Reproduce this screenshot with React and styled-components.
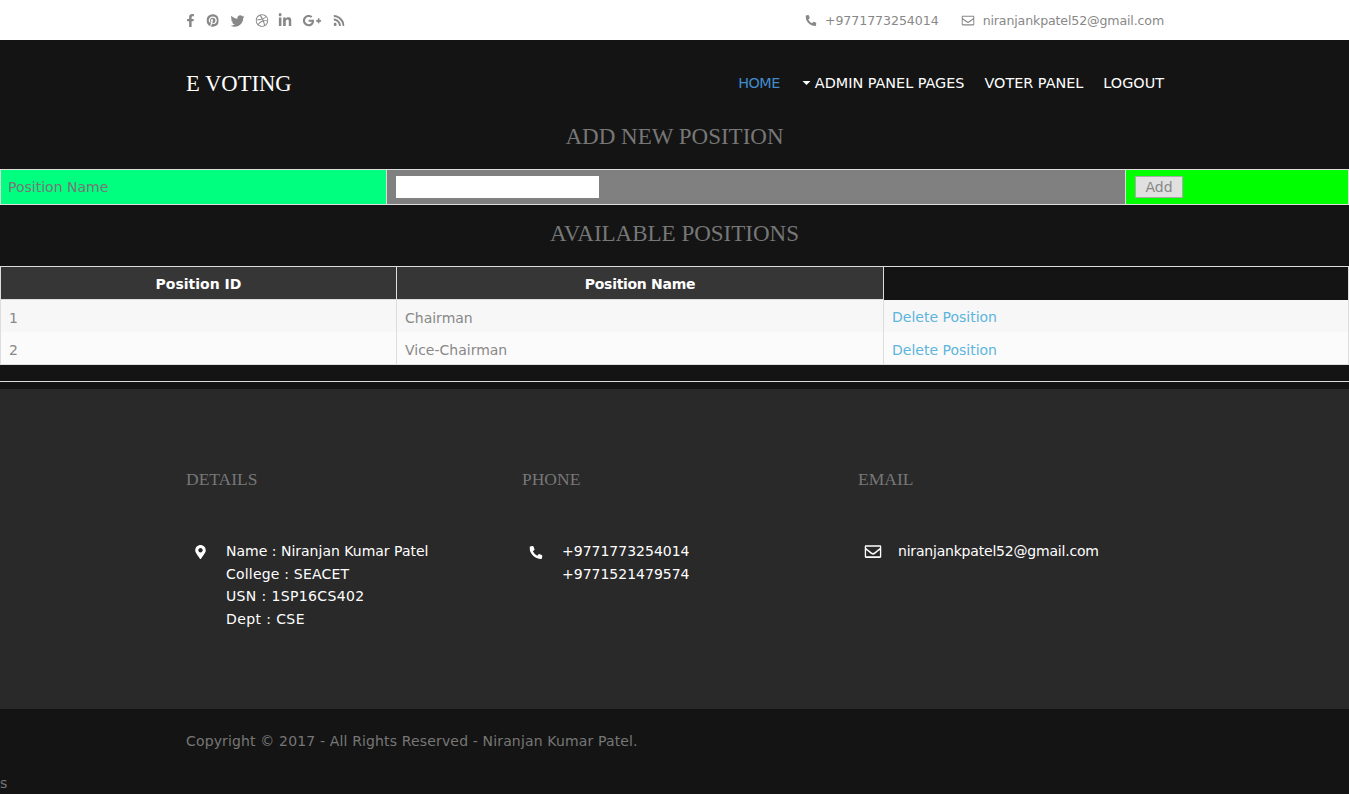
import styled, { createGlobalStyle } from "styled-components";
import {
  FaFacebookF,
  FaPinterest,
  FaTwitter,
  FaDribbble,
  FaLinkedinIn,
  FaGooglePlusG,
  FaRss,
  FaPhoneAlt,
  FaRegEnvelope,
  FaMapMarkerAlt,
} from "react-icons/fa";

const SOCIAL = [
  { Icon: FaFacebookF, w: 8, h: 13, slot: 20 },
  { Icon: FaPinterest, w: 12.6, h: 13, slot: 24 },
  { Icon: FaTwitter, w: 14, h: 14, slot: 25 },
  { Icon: FaDribbble, w: 13, h: 13, slot: 23 },
  { Icon: FaLinkedinIn, w: 13, h: 15, slot: 24 },
  { Icon: FaGooglePlusG, w: 19, h: 15.2, slot: 31 },
  { Icon: FaRss, w: 11.4, h: 13, slot: 11 },
];
const POSITIONS = [
  { id: 1, name: "Chairman" },
  { id: 2, name: "Vice-Chairman" },
];

const GlobalStyle = createGlobalStyle`
  html, body { margin: 0; padding: 0; }
  body {
    background: #141414;
    color: #777;
    font-family: "DejaVu Sans", Verdana, sans-serif;
    font-size: 14px;
  }
`;

const Container = styled.div`
  width: 978px;
  margin: 0 auto;
  transform: translateX(0.5px);
`;

const TopBar = styled.div`
  background: #fff;
  height: 40px;
`;
const TopInner = styled(Container)`
  display: flex;
  justify-content: space-between;
  align-items: center;
  height: 40px;
`;
const Socials = styled.div`
  display: flex;
  align-items: center;
  margin-top: 1px;
  color: #888;
`;
const SocialSlot = styled.a`
  display: flex;
  align-items: center;
  width: ${({ $slot }) => $slot}px;
  svg {
    width: ${({ $w }) => $w}px;
    height: ${({ $h }) => $h}px;
  }
`;
const Contacts = styled.div`
  display: flex;
  gap: 23px;
  font-size: 12.6px;
  color: #888;
`;
const Contact = styled.span`
  display: flex;
  align-items: center;
  gap: 8px;
`;
const ContactText = styled.span`
  letter-spacing: ${({ $track }) => $track || 0}px;
`;

const Nav = styled(Container)`
  display: flex;
  justify-content: space-between;
  align-items: center;
  height: 73px;
  padding-top: 14px;
  box-sizing: border-box;
`;
const Logo = styled.div`
  font-family: "Liberation Serif", Georgia, serif;
  font-size: 22.6px;
  color: #fff;
`;
const Menu = styled.div`
  display: flex;
  align-items: center;
  gap: 20px;
  padding-bottom: 2px;
`;
const MenuItem = styled.a`
  color: ${({ $active }) => ($active ? "#428bca" : "#fff")};
  font-size: 14.4px;
  display: flex;
  align-items: center;
  margin-left: ${({ $caret }) => ($caret ? "3px" : "0")};
  letter-spacing: ${({ $active }) => ($active ? "-0.5px" : "0")};
`;
const Caret = styled.span`
  display: inline-block;
  margin-right: 4px;
  border-top: 4px solid #fff;
  border-left: 4px solid transparent;
  border-right: 4px solid transparent;
`;

const Heading = styled.h2`
  margin: 0;
  text-align: center;
  font-family: "Liberation Serif", Georgia, serif;
  font-weight: 400;
  font-size: 23px;
  line-height: 28px;
  color: #777;
  padding-top: ${({ $top }) => $top}px;
  padding-bottom: ${({ $bottom }) => $bottom}px;
`;

const Table = styled.table`
  width: 100%;
  table-layout: fixed;
  border-collapse: collapse;
  border: 1px solid #ddd;
  font-size: 14px;
`;
const FormCell = styled.td`
  background: ${({ $bg }) => $bg};
  border: 1px solid #ddd;
  height: 35px;
  padding: 0 ${({ $pad }) => $pad}px;
  box-sizing: border-box;
`;
const NameInput = styled.input`
  display: block;
  width: 203px;
  height: 22px;
  border: 0;
  padding: 0;
  background: #fff;
`;
const AddButton = styled.button`
  display: block;
  width: 48px;
  height: 22px;
  padding: 0;
  background: #e0e0e0;
  border: 1px solid #aaa;
  color: #888;
  font-family: inherit;
  font-size: 14px;
`;
const HeadCell = styled.th`
  height: 33px;
  padding: 1px 8px 0;
  box-sizing: border-box;
  background: ${({ $empty }) => ($empty ? "#141414" : "#363636")};
  border: 1px solid #ddd;
  border-bottom: ${({ $empty }) => ($empty ? "0" : "1px solid #ddd")};
  color: #fff;
  font-weight: 700;
  font-size: 14px;
  letter-spacing: ${({ $track }) => $track || 0}px;
`;
const Row = styled.tr`
  background: ${({ $odd }) => ($odd ? "#f7f7f7" : "#fbfbfb")};
`;
const Cell = styled.td`
  height: 32.5px;
  padding: 3px 8px 0;
  box-sizing: border-box;
  border-left: 1px solid #ddd;
  border-right: 1px solid #ddd;
  color: #888;
`;
const DeleteLink = styled.a`
  color: #5bb5de;
`;
const Rule = styled.hr`
  margin: 16px 0 7px;
  border: 0;
  border-top: 1px solid #ddd;
`;

const Footer = styled.footer`
  background: #292929;
  height: 320px;
  padding-top: 78px;
  box-sizing: border-box;
`;
const Columns = styled(Container)`
  display: grid;
  grid-template-columns: repeat(3, 336px);
`;
const ColTitle = styled.h3`
  margin: 0 0 49px;
  font-family: "Liberation Serif", Georgia, serif;
  font-weight: 400;
  font-size: 17.5px;
  line-height: 24px;
  color: #777;
`;
const ColBody = styled.div`
  display: flex;
  color: #fff;
  font-size: 14px;
  line-height: 22.6px;
`;
const ColIcon = styled.span`
  flex: none;
  width: ${({ $w }) => $w}px;
  padding-left: ${({ $pad }) => $pad}px;
  box-sizing: border-box;
  padding-top: 3px;
`;
const Line = styled.div`
  letter-spacing: ${({ $track }) => $track || 0}px;
`;

const Bottom = styled.div`
  height: 85px;
`;
const CopyBar = styled(Container)`
  padding-top: 23px;
  line-height: 18px;
  color: #777;
  letter-spacing: 0.15px;
`;
const Stray = styled.div`
  margin-top: 25px;
  color: #777;
  line-height: 16px;
  font-size: 14px;
`;

export default function App() {
  return (
    <>
      <GlobalStyle />
      <TopBar>
        <TopInner>
          <Socials>
            {SOCIAL.map(({ Icon, w, h, slot }, i) => (
              <SocialSlot key={i} $slot={slot} $w={w} $h={h}>
                <Icon />
              </SocialSlot>
            ))}
          </Socials>
          <Contacts>
            <Contact>
              <FaPhoneAlt size={11} />
              <ContactText $track={-0.07}>+9771773254014</ContactText>
            </Contact>
            <Contact>
              <FaRegEnvelope size={13} />
              <ContactText $track={-0.15}>niranjankpatel52@gmail.com</ContactText>
            </Contact>
          </Contacts>
        </TopInner>
      </TopBar>
      <Nav>
        <Logo>E VOTING</Logo>
        <Menu>
          <MenuItem $active>HOME</MenuItem>
          <MenuItem $caret>
            <Caret />
            ADMIN PANEL PAGES
          </MenuItem>
          <MenuItem>VOTER PANEL</MenuItem>
          <MenuItem>LOGOUT</MenuItem>
        </Menu>
      </Nav>
      <Heading $top={10} $bottom={18}>
        ADD NEW POSITION
      </Heading>
      <Table>
        <colgroup>
          <col style={{ width: 386 }} />
          <col style={{ width: 739 }} />
          <col />
        </colgroup>
        <tbody>
          <tr>
            <FormCell $bg="#00ff7f" $pad={7}>
              Position Name
            </FormCell>
            <FormCell $bg="#808080" $pad={9}>
              <NameInput type="text" />
            </FormCell>
            <FormCell $bg="#00ff00" $pad={9}>
              <AddButton>Add</AddButton>
            </FormCell>
          </tr>
        </tbody>
      </Table>
      <Heading $top={15} $bottom={18}>
        AVAILABLE POSITIONS
      </Heading>
      <Table>
        <colgroup>
          <col style={{ width: 396 }} />
          <col style={{ width: 487 }} />
          <col />
        </colgroup>
        <thead>
          <tr>
            <HeadCell>Position ID</HeadCell>
            <HeadCell $track={-0.3}>Position Name</HeadCell>
            <HeadCell $empty />
          </tr>
        </thead>
        <tbody>
          {POSITIONS.map((p, i) => (
            <Row key={p.id} $odd={i === 0}>
              <Cell>{p.id}</Cell>
              <Cell>{p.name}</Cell>
              <Cell>
                <DeleteLink>Delete Position</DeleteLink>
              </Cell>
            </Row>
          ))}
        </tbody>
      </Table>
      <Rule />
      <Footer>
        <Columns>
          <div>
            <ColTitle>DETAILS</ColTitle>
            <ColBody>
              <ColIcon $w={40} $pad={7}>
                <FaMapMarkerAlt size={14} />
              </ColIcon>
              <div>
                <Line>Name : Niranjan Kumar Patel</Line>
                <Line $track={0.2}>College : SEACET</Line>
                <Line $track={0.37}>USN : 1SP16CS402</Line>
                <Line $track={0.4}>Dept : CSE</Line>
              </div>
            </ColBody>
          </div>
          <div>
            <ColTitle>PHONE</ColTitle>
            <ColBody>
              <ColIcon $w={40} $pad={7}>
                <FaPhoneAlt size={13} />
              </ColIcon>
              <div>
                <Line>+9771773254014</Line>
                <Line>+9771521479574</Line>
              </div>
            </ColBody>
          </div>
          <div>
            <ColTitle>EMAIL</ColTitle>
            <ColBody>
              <ColIcon $w={40} $pad={6}>
                <FaRegEnvelope size={17} />
              </ColIcon>
              <div>
                <Line $track={-0.2}>niranjankpatel52@gmail.com</Line>
              </div>
            </ColBody>
          </div>
        </Columns>
      </Footer>
      <Bottom>
        <CopyBar>Copyright © 2017 - All Rights Reserved - Niranjan Kumar Patel.</CopyBar>
        <Stray>s</Stray>
      </Bottom>
    </>
  );
}
